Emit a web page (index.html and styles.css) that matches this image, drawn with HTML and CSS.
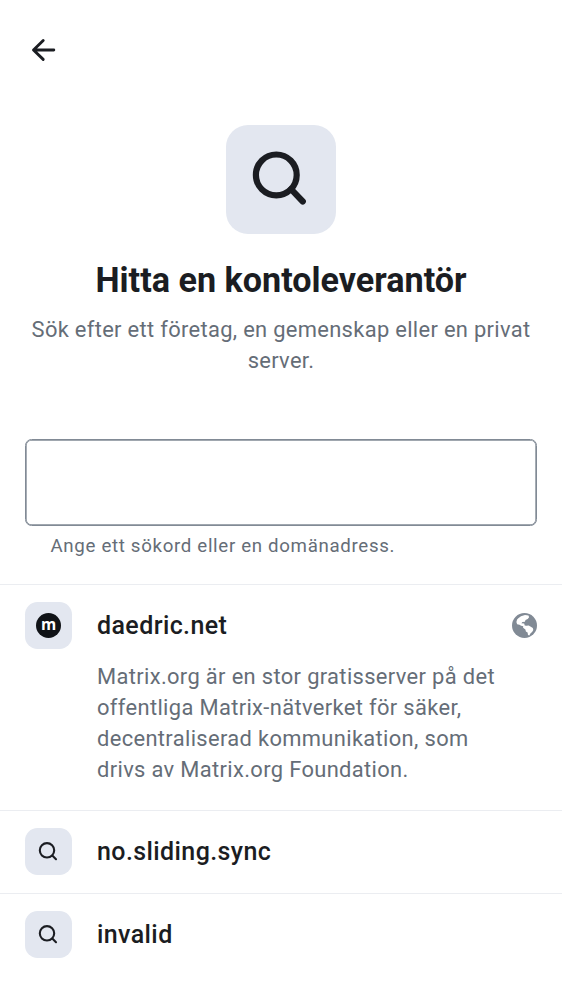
FILE: index.html
```html
<!DOCTYPE html>
<html lang="sv">
<head>
<meta charset="utf-8">
<title>Hitta en kontoleverantör</title>
<link rel="stylesheet" href="styles.css">
</head>
<body>
<main class="screen">
  <header class="topbar">
    <svg class="back" viewBox="0 0 26 24" aria-label="Tillbaka"><path d="M13.2 2.5 3.5 12l9.7 9.4M3.7 12h20.1"/></svg>
  </header>
  <section class="hero">
    <div class="hero-tile">
      <svg viewBox="0 0 110 110"><circle cx="50.3" cy="49.9" r="20.4"/><path d="m65 64.2 11.8 12.3"/></svg>
    </div>
    <h1 class="title">Hitta en kontoleverantör</h1>
    <p class="subtitle">Sök efter ett företag, en gemenskap eller en privat server.</p>
  </section>
  <section class="search">
    <input class="field" type="text" aria-label="Sökord">
    <p class="helper">Ange ett sökord eller en domänadress.</p>
  </section>
  <section class="results">
    <article class="item featured">
      <div class="row">
        <div class="tile"><span class="matrix">m</span></div>
        <h2 class="name">daedric.net</h2>
        <svg class="globe" viewBox="0 0 25 25"><circle cx="12.5" cy="12.5" r="12.5"/><path d="M6.3 5.2 9 3.3l4-1.3 3.5.4.6 1.8-1.4 1.7-2.2 1-.6 1.9-2.5.2-1 1.3 2.8.3.5 1.8 1.6.3 2.4-.2 2.1 1.3 2 1.2.5 2-1.2 2-1.5 1.2-1.3 2.2-1.3-.4-.4-2.5-1.7-1-.5-2-2.3-1.7.1-1.5-2.1-.5-1.6-1-2.4-.5-.7-2.4.7-2.5z"/></svg>
      </div>
      <p class="description">Matrix.org är en stor gratisserver på det offentliga Matrix-nätverket för säker, decentraliserad kommunikation, som drivs av Matrix.org Foundation.</p>
    </article>
    <article class="item">
      <div class="row">
        <div class="tile"><svg viewBox="0 0 47 47"><circle cx="22" cy="22.3" r="7.2"/><path d="m27.3 27.5 3.7 3.7"/></svg></div>
        <h2 class="name">no.sliding.sync</h2>
      </div>
    </article>
    <article class="item">
      <div class="row">
        <div class="tile"><svg viewBox="0 0 47 47"><circle cx="22" cy="22.3" r="7.2"/><path d="m27.3 27.5 3.7 3.7"/></svg></div>
        <h2 class="name">invalid</h2>
      </div>
    </article>
  </section>
</main>
</body>
</html>
```
FILE: styles.css
```css
* { box-sizing: border-box; }
body { margin: 0; background: #fff; color: #1b1d22; font-family: Roboto, sans-serif; }
h1, h2, p { margin: 0; }
svg { display: block; fill: none; stroke: #1b1d22; stroke-linecap: round; stroke-linejoin: round; }
.screen { width: 562px; height: 1000px; overflow: hidden; }
.topbar { height: 100px; padding: 38px 30px; }
.back { width: 26px; height: 24px; stroke-width: 2.9; }
.hero { display: flex; flex-direction: column; align-items: center; padding: 25px 25px 0; text-align: center; }
.hero-tile { width: 110px; height: 109px; border-radius: 22px; background: #e3e7f0; }
.hero-tile svg { width: 110px; height: 110px; stroke-width: 6.2; }
.title { margin-top: 25px; font-size: 34.15px; line-height: 42px; font-weight: 700; white-space: nowrap; }
.subtitle { margin-top: 13px; font-size: 21.9px; line-height: 31.2px; letter-spacing: .32px; color: #656d77; }
.search { padding: 62.5px 25px 0; }
.field { display: block; width: 512px; height: 87.5px; border: 1px solid #818a95; border-radius: 6.5px; background: #fff; box-shadow: inset 0 0 0 .7px #818a95; outline: none; }
.helper { padding: 7.5px 25.5px 0; font-size: 18.7px; line-height: 25px; letter-spacing: .67px; color: #656d77; }
.results { margin-top: 25px; }
.item { height: 83px; border-top: 1px solid #ebedf1; padding: 17px 25px 0; }
.featured { height: 226px; }
.row { display: flex; align-items: center; height: 47px; }
.tile { display: flex; align-items: center; justify-content: center; width: 47px; height: 47px; border-radius: 12.5px; background: #e3e7f0; }
.tile svg { width: 47px; height: 47px; stroke-width: 2.1; }
.matrix { width: 25px; height: 25px; border-radius: 50%; background: #101317; color: #fff; font: 700 15.5px/22px "Open Sans", sans-serif; text-align: center; }
.name { margin-left: 25px; font-size: 25px; line-height: 37px; font-weight: 500; letter-spacing: .4px; }
.globe { width: 25px; height: 25px; margin-left: auto; stroke: none; }
.globe circle { fill: #818a95; }
.globe path { fill: #fff; }
.description { width: 480px; padding: 11.7px 0 0 72px; font-size: 21.9px; line-height: 31.2px; letter-spacing: .35px; color: #656d77; }
```
